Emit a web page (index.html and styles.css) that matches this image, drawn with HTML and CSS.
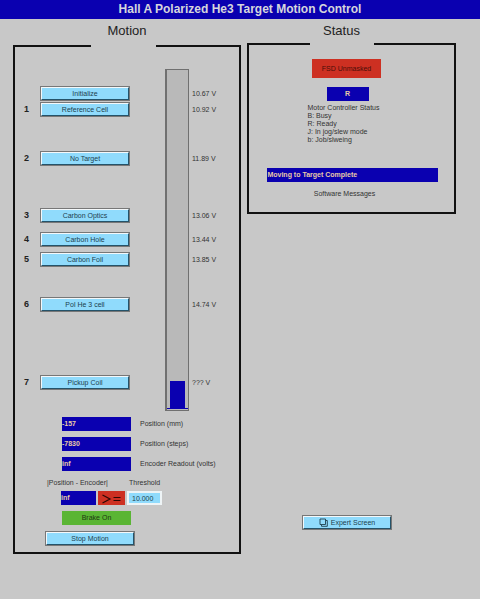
FILE: index.html
```
<!DOCTYPE html>
<html lang="en">
<head>
  <meta charset="UTF-8">
  <meta name="viewport" content="width=device-width, initial-scale=1.0">
  <title>Hall A Polarized He3 Target Motion Control</title>
  <link rel="stylesheet" href="styles.css">
</head>
<body>
  <header>
    <h1>Hall A Polarized He3 Target Motion Control</h1>
  </header>

  <main>
    <!-- Motion panel -->
    <section class="panel motion">
      <h2>Motion</h2>
      <div class="frame">
        <div class="targets">
          <button class="button">Initialize</button>
          <span class="volts">10.67 V</span>

          <span class="number">1</span>
          <button class="button">Reference Cell</button>
          <span class="volts">10.92 V</span>

          <span class="number">2</span>
          <button class="button">No Target</button>
          <span class="volts">11.89 V</span>

          <span class="number">3</span>
          <button class="button">Carbon Optics</button>
          <span class="volts">13.06 V</span>

          <span class="number">4</span>
          <button class="button">Carbon Hole</button>
          <span class="volts">13.44 V</span>

          <span class="number">5</span>
          <button class="button">Carbon Foil</button>
          <span class="volts">13.85 V</span>

          <span class="number">6</span>
          <button class="button">Pol He 3 cell</button>
          <span class="volts">14.74 V</span>

          <span class="number">7</span>
          <button class="button">Pickup Coil</button>
          <span class="volts">??? V</span>

          <div class="gauge"><div class="gauge-level"></div></div>
        </div>

        <div class="readouts">
          <div class="readout-row">
            <output class="readout" id="position-mm">-157</output>
            <label for="position-mm">Position (mm)</label>
          </div>
          <div class="readout-row">
            <output class="readout" id="position-steps">-7830</output>
            <label for="position-steps">Position (steps)</label>
          </div>
          <div class="readout-row">
            <output class="readout" id="encoder">inf</output>
            <label for="encoder">Encoder Readout (volts)</label>
          </div>
        </div>

        <div class="compare">
          <label class="difference-label" for="difference">|Position - Encoder|</label>
          <label class="threshold-label" for="threshold">Threshold</label>
          <output class="readout" id="difference">inf</output>
          <span class="operator">
            <svg viewBox="0 0 27 14" width="27" height="14" aria-label="greater or equal">
              <path d="M4.500 4L12 8L4.500 12M15.500 6.500H22.500M15.500 9.500H22.500" fill="none" stroke="#2b0805" stroke-width="1.2"/>
            </svg>
          </span>
          <input class="threshold" id="threshold" type="text" value="10.000">
        </div>

        <div class="brake">Brake On</div>
        <button class="button stop">Stop Motion</button>
      </div>
    </section>

    <!-- Status panel -->
    <div class="side">
      <section class="panel status">
        <h2>Status</h2>
        <div class="frame">
          <div class="fsd">FSD Unmasked</div>
          <output class="readout controller" id="controller">R</output>
          <div class="legend">
            <label for="controller">Motor Controller Status</label>
            <p>B: Busy</p>
            <p>R: Ready</p>
            <p>J: In jog/slew mode</p>
            <p>b: Job/slweing</p>
          </div>
          <output class="readout message" id="message">Moving to Target Complete</output>
          <label class="message-label" for="message">Software Messages</label>
        </div>
      </section>

      <button class="button expert">
        <svg viewBox="0 0 9 9" width="9" height="9" aria-hidden="true">
          <path d="M1 1H6.500V6.500H1ZM7 2.500H8.300V8.300H2.500V7" fill="none" stroke="#1d3f4e" stroke-width="0.9"/>
        </svg>
        Expert Screen
      </button>
    </div>
  </main>
</body>
</html>
```
FILE: styles.css
```
:root {
  --background: #c8c8c8;
  --blue: #0a00b0;
  --sky: #90dbfc;
  --red: #cd3022;
  --green: #5ab534;
  --tan: #e8cba6;
  --text-color: #333;
}

* {
  margin: 0;
  padding: 0;
  box-sizing: border-box;
  font-family: "Liberation Sans", Arial, Helvetica, sans-serif;
}

body {
  min-height: 100vh;
  background-color: var(--background);
  color: var(--text-color);
  font-size: 7px;
  line-height: 8px;
}

header {
  height: 19px;
  background-color: var(--blue);
  color: #d6d6dc;
  text-align: center;
}

h1 {
  font-size: 12px;
  line-height: 19px;
}

h2 {
  color: #222;
  font-size: 13px;
  font-weight: normal;
  line-height: 16px;
  text-align: center;
}

main {
  display: grid;
  grid-template-columns: 228fr 209fr;
  gap: 6px;
  padding: 4px 24px 16px 13px;
}

/* Panels */
.frame {
  border: 2px solid #111;
  border-top: none;
}

.frame::before {
  content: "";
  display: block;
  height: 2px;
}

.motion h2 {
  padding-bottom: 6px;
}

.motion .frame::before {
  background: linear-gradient(to right, #111 34%, transparent 34% 63%, #111 63%);
}

.status h2 {
  padding: 0 20px 4px 0;
}

.status .frame::before {
  background: linear-gradient(to right, #111 30%, transparent 30% 61%, #111 61%);
}

/* Raised buttons */
.button {
  width: 90px;
  height: 15px;
  border: 2px solid;
  border-color: #f4f8fa #24536a #24536a #f4f8fa;
  outline: 1px solid #777;
  outline-offset: -1px;
  background-color: var(--sky);
  color: #1d3f4e;
  font-size: 7px;
  line-height: 11px;
  text-align: center;
  cursor: pointer;
}

/* Target list and gauge */
.targets {
  display: grid;
  grid-template-columns: 25px 5fr 24px 2fr;
  grid-template-rows: 32px 16px 49px 57px 24px 20px 45px 78px 21px;
  align-items: end;
  margin-top: 22px;
}

.number {
  grid-column: 1;
  padding: 0 0 4px 9px;
  color: #222;
  font-size: 9px;
  font-weight: bold;
}

.targets .button {
  grid-column: 2;
}

.volts {
  grid-column: 4;
  padding: 0 0 3px 3px;
}

.gauge {
  grid-column: 3;
  grid-row: 1 / -1;
  align-self: stretch;
  display: flex;
  align-items: flex-end;
  padding: 0 3px 2px;
  border: 1px solid #707070;
  border-left-width: 2px;
  background: linear-gradient(var(--blue), var(--blue)) bottom 1px left 0 / 100% 1px no-repeat #b9b9b9;
}

.gauge-level {
  flex: 1;
  height: 8%;
  background-color: var(--blue);
}

/* Readouts */
.readout {
  display: block;
  height: 14px;
  background-color: var(--blue);
  color: var(--tan);
  font-weight: bold;
  line-height: 14px;
}

.readouts {
  display: grid;
  gap: 6px;
  padding: 6px 0 0 47px;
}

.readout-row {
  display: grid;
  grid-template-columns: 69px 1fr;
  align-items: center;
  gap: 9px;
}

.compare {
  display: grid;
  grid-template-columns: 35px 27px 35px;
  gap: 4px 2px;
  padding: 8px 0 0 46px;
}

.difference-label {
  grid-column: 1 / 3;
  margin-left: -14px;
  white-space: nowrap;
}

.threshold-label {
  padding-left: 2px;
}

.operator {
  height: 14px;
  background-color: var(--red);
}

.operator svg {
  display: block;
}

.threshold {
  width: 100%;
  height: 14px;
  padding-left: 3px;
  border: 2px solid #eef4f6;
  background-color: var(--sky);
  color: #1d3f4e;
  font-size: 7px;
}

.brake {
  width: 69px;
  margin: 6px 0 0 47px;
  background-color: var(--green);
  color: #1d3a12;
  line-height: 14px;
  text-align: center;
}

.stop {
  display: block;
  margin: 6px 0 6px 30px;
}

/* Status panel */
.status .frame {
  display: flex;
  flex-direction: column;
  align-items: center;
  padding-bottom: 14px;
}

.status .frame::before {
  width: 100%;
}

.fsd {
  width: 69px;
  margin: 14px 10px 0 0;
  background-color: var(--red);
  color: #4a0d08;
  line-height: 19px;
  text-align: center;
}

.controller {
  width: 42px;
  margin: 9px 8px 0 0;
  text-align: center;
}

.legend {
  width: 80px;
  margin: 3px 8px 0 0;
}

.message {
  width: 83%;
  margin: 24px 0 0 2px;
}

.message-label {
  margin: 8px 14px 0 0;
}

.expert {
  display: flex;
  align-items: center;
  justify-content: center;
  gap: 3px;
  margin: 301px auto 0 55px;
}
```
